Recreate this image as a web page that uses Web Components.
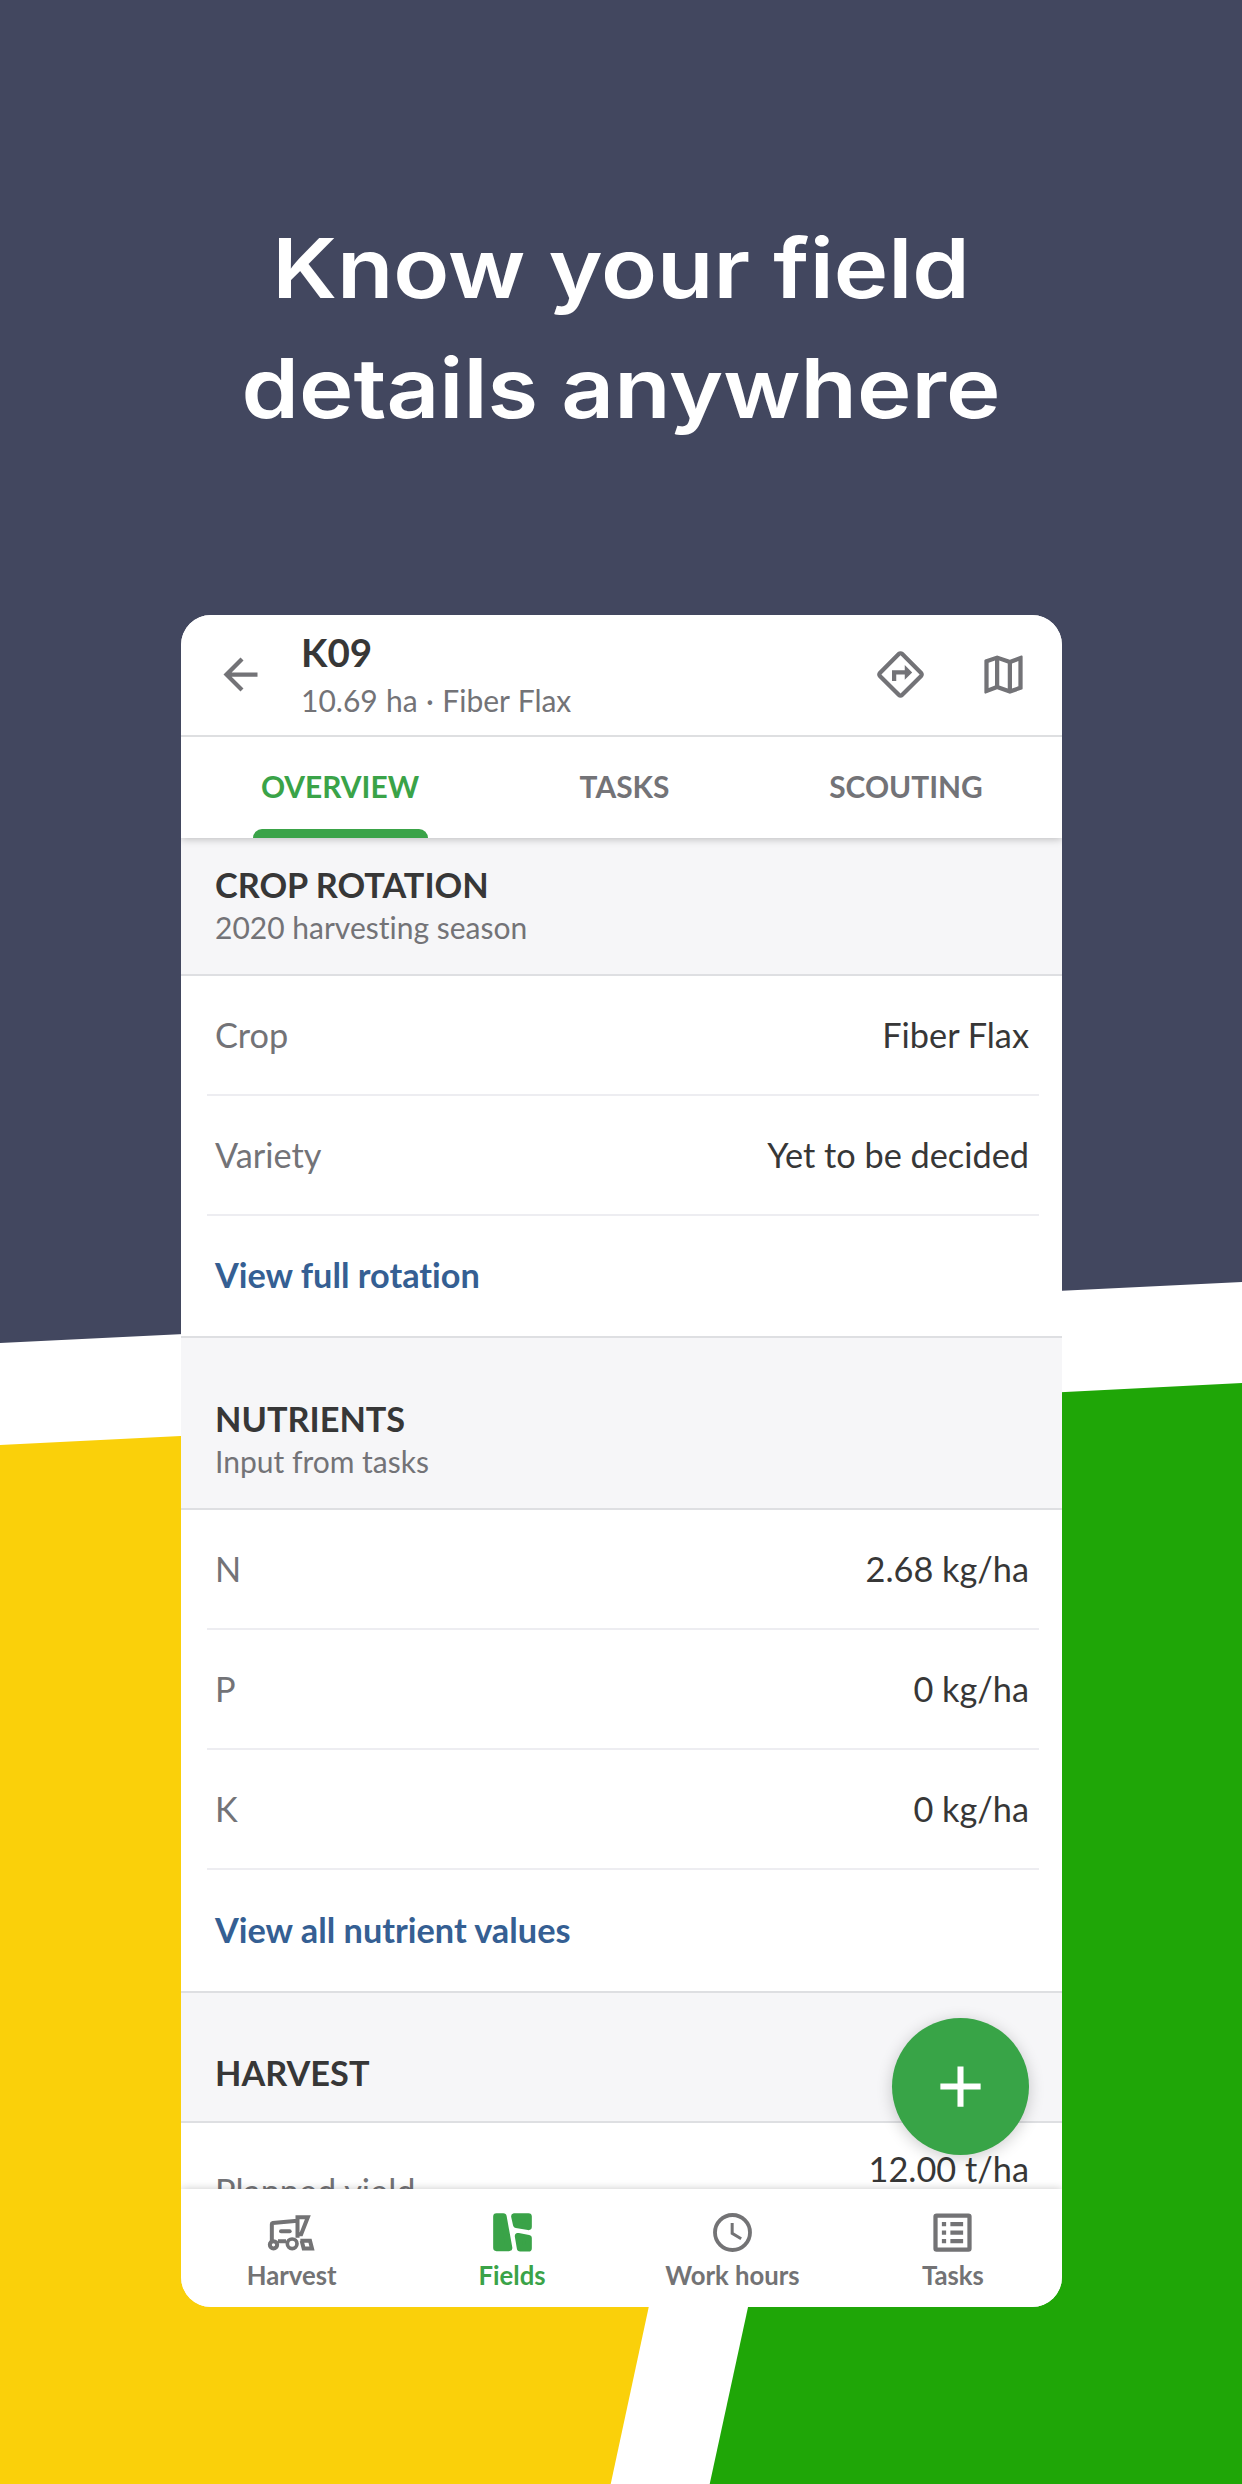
<!DOCTYPE html>
<html lang="en">
<head>
<meta charset="utf-8">
<title>Know your field details anywhere</title>
<style>
    body {
        margin: 0;
        font-family: Lato, sans-serif;
        font-variant-ligatures: none;
        color: #373737;
    }
</style>
</head>
<body>
<promo-page>
    <promo-headline slot="headline">
        <span>Know your field</span>
        <span>details anywhere</span>
    </promo-headline>
    <phone-card>
        <field-header slot="top" name="K09">10.69 ha · Fiber Flax</field-header>
        <tab-bar slot="top">
            <tab-item active>OVERVIEW</tab-item>
            <tab-item>TASKS</tab-item>
            <tab-item>SCOUTING</tab-item>
        </tab-bar>

        <section-head class="first" heading="CROP ROTATION">2020 harvesting season</section-head>
        <data-row label="Crop">Fiber Flax</data-row>
        <data-row label="Variety">Yet to be decided</data-row>
        <link-row>View full rotation</link-row>

        <section-head heading="NUTRIENTS">Input from tasks</section-head>
        <data-row label="N">2.68 kg/ha</data-row>
        <data-row label="P">0 kg/ha</data-row>
        <data-row label="K">0 kg/ha</data-row>
        <link-row class="tall">View all nutrient values</link-row>

        <section-head class="third" heading="HARVEST"></section-head>
        <data-row class="double" label="Planned yield">12.00 t/ha</data-row>

        <add-button slot="fab"></add-button>
        <nav-bar slot="bottom">
            <nav-item icon="harvest">Harvest</nav-item>
            <nav-item icon="fields" active>Fields</nav-item>
            <nav-item icon="clock">Work hours</nav-item>
            <nav-item icon="list">Tasks</nav-item>
        </nav-bar>
    </phone-card>
</promo-page>

<script>
const ICONS = {
    back: `<svg viewBox="0 0 24 24"><path d="M20 11H7.83l5.59-5.59L12 4l-8 8 8 8 1.41-1.41L7.83 13H20v-2z"/></svg>`,
    directions: `<svg viewBox="0 0 24 24"><path d="M22.43 10.59l-9.01-9.01c-.75-.75-2.07-.76-2.83 0l-9 9c-.78.78-.78 2.04 0 2.82l9 9c.39.39.9.58 1.41.58.51 0 1.02-.19 1.41-.58l8.99-8.99c.79-.76.8-2.02.03-2.82zm-10.42 10.4l-9-9 9-9 9 9-9 9zM8 10v5h2v-3h4v2.5l3.5-3.5L14 7.5V10z"/></svg>`,
    map: `<svg viewBox="0 0 24 24"><path d="M20.5 3l-.16.03L15 5.1 9 3 3.36 4.9c-.21.07-.36.25-.36.48V20.5c0 .28.22.5.5.5l.16-.03L9 18.9l6 2.1 5.64-1.9c.21-.07.36-.25.36-.48V3.5c0-.28-.22-.5-.5-.5zM10 5.47l4 1.4v11.66l-4-1.4V5.47zm-5 .99l3-1.01v11.7l-3 1.16V6.46zm14 11.08l-3 1.01V6.86l3-1.16v11.84z"/></svg>`,
    clock: `<svg viewBox="0 0 153 153" fill="none" stroke="currentColor"><circle cx="76.5" cy="76.5" r="52.5" stroke-width="11.5"/><path d="M75.5 48v31l27 16" stroke-width="9"/></svg>`,
    list: `<svg viewBox="0 0 24 24"><path d="M19 5v14H5V5h14m.5-2h-15A1.5 1.5 0 0 0 3 4.5v15A1.5 1.5 0 0 0 4.5 21h15a1.5 1.5 0 0 0 1.5-1.5v-15A1.5 1.5 0 0 0 19.5 3zM11 7h6v2h-6V7zm0 4h6v2h-6v-2zm0 4h6v2h-6v-2zM7 7h2v2H7V7zm0 4h2v2H7v-2zm0 4h2v2H7v-2z"/></svg>`,
    fields: `<svg viewBox="0 0 153 153" stroke="currentColor" stroke-width="20" stroke-linejoin="round"><path d="M28.5 28.5H49L66 122.5H28.5zM82.5 28.5h42V59.5L88 53zM93.5 88l31 6v29.5h-25z"/></svg>`,
    harvest: `<svg viewBox="0 0 153 153" fill="none" stroke="currentColor" stroke-width="12"><path d="M17.5 104V51q0-2.5 2.5-2.8L94.5 41M94.5 92V30.5h31l-20 51h-11M36 103h24M103 101.5h29l6 23h-25l-6-23"/><path d="M45 72.5h26" stroke-linecap="round"/><circle cx="22.5" cy="113.5" r="11"/><circle cx="78.5" cy="110.5" r="14.5" stroke-width="11"/></svg>`,
    plus: `<svg viewBox="0 0 24 24"><path d="M19 13.05h-5.95V19h-2.1v-5.95H5v-2.1h5.95V5h2.1v5.95H19z"/></svg>`,
};

class BaseElement extends HTMLElement {
    constructor() {
        super();
        this.attachShadow({ mode: 'open' });
    }

    connectedCallback() {
        const template = document.createElement('template');
        template.innerHTML = `<style>${this.constructor.style}</style>${this.html}`;
        this.shadowRoot.replaceChildren(template.content.cloneNode(true));
    }

    get html() {
        return `<slot></slot>`;
    }
}

class PromoPage extends BaseElement {
    get html() {
        return `
            <svg class="shapes" viewBox="0 0 1242 2484">
                <path fill="#42475f" d="M0 0H1242V1282L0 1343z"/>
                <path fill="#fad00a" d="M0 1445L843 1403L610.7 2484H0z"/>
                <path fill="#1fa607" d="M945 1398L1242 1383V2484H709.7z"/>
            </svg>
            <slot name="headline"></slot>
            <slot></slot>
        `;
    }

    static get style() {
        return `
            :host {
                display: flex;
                flex-direction: column;
                position: relative;
                box-sizing: border-box;
                width: 1242px;
                height: 2484px;
                padding-left: 181px;
                background: #fff;
                overflow: hidden;
            }
            .shapes {
                position: absolute;
                inset: 0;
            }
        `;
    }
}

class PromoHeadline extends BaseElement {
    static get style() {
        return `
            :host {
                display: flex;
                flex-direction: column;
                align-items: center;
                position: relative;
                box-sizing: border-box;
                width: 880px;
                height: 615px;
                padding-top: 208px;
                font: 600 83px/120px Inter, sans-serif;
                font-variant-ligatures: none;
                color: #fff;
                transform: scaleX(1.11);
            }
        `;
    }
}

class PhoneCard extends BaseElement {
    get html() {
        return `
            <div class="top"><slot name="top"></slot></div>
            <div class="content"><slot></slot></div>
            <slot name="fab"></slot>
            <slot name="bottom"></slot>
        `;
    }

    static get style() {
        return `
            :host {
                display: flex;
                flex-direction: column;
                position: relative;
                width: 881px;
                height: 1692px;
                border-radius: 30px;
                background: #fff;
                overflow: hidden;
            }
            .top {
                position: relative;
                z-index: 1;
                background: #fff;
                box-shadow: 0 1px 8px rgba(0, 0, 0, .25);
            }
            .content {
                flex: 1;
                min-height: 0;
                overflow: hidden;
            }
        `;
    }
}

class FieldHeader extends BaseElement {
    get html() {
        return `
            ${ICONS.back}
            <div class="titles">
                <div class="name">${this.getAttribute('name')}</div>
                <div class="info"><slot></slot></div>
            </div>
            ${ICONS.directions}
            ${ICONS.map}
        `;
    }

    static get style() {
        return `
            :host {
                display: flex;
                align-items: center;
                height: 120px;
                padding: 0 33px 0 34px;
                border-bottom: 2px solid #dedfe1;
                color: #737377;
            }
            svg {
                width: 51px;
                height: 51px;
                margin-top: -1px;
                fill: currentColor;
            }
            svg + svg {
                margin-left: 52px;
            }
            .titles {
                flex: 1;
                margin: -4px 0 0 35px;
            }
            .name {
                font-size: 38.6px;
                font-weight: bold;
                line-height: 48px;
                color: #373737;
            }
            .info {
                margin-top: 6px;
                font-size: 30px;
                line-height: 36px;
                word-spacing: .7px;
            }
        `;
    }
}

class TabBar extends BaseElement {
    static get style() {
        return `
            :host {
                display: grid;
                grid-template-columns: 318px 251px 1fr;
                height: 101px;
            }
        `;
    }
}

class TabItem extends BaseElement {
    get html() {
        return `<span></span><div><slot></slot></div><span class="mark"></span>`;
    }

    static get style() {
        return `
            :host {
                display: grid;
                grid-template-rows: 6px 1fr 9px;
                justify-items: center;
                align-items: center;
                font-size: 29.9px;
                font-weight: bold;
                line-height: 36px;
                color: #737377;
            }
            :host([active]) {
                color: #3aa348;
            }
            :host([active]) .mark {
                width: 175px;
                height: 9px;
                border-radius: 9px 9px 0 0;
                background: currentColor;
            }
        `;
    }
}

class SectionHead extends BaseElement {
    get html() {
        return `
            <div class="heading">${this.getAttribute('heading')}</div>
            <div class="note"><slot></slot></div>
        `;
    }

    static get style() {
        return `
            :host {
                display: flex;
                flex-direction: column;
                justify-content: flex-end;
                box-sizing: border-box;
                height: 174px;
                padding: 0 34px 29px;
                border: solid #dedfe2;
                border-width: 2px 0;
                background: #f6f6f8;
            }
            :host(.first) {
                height: 138px;
                border-top: 0;
            }
            :host(.third) {
                height: 132px;
                padding-bottom: 27px;
            }
            .heading {
                font-size: 34.3px;
                font-weight: bold;
                line-height: 42px;
            }
            .note {
                margin-top: 3px;
                font-size: 30px;
                line-height: 36px;
                color: #737377;
            }
            :host(.third) .note {
                display: none;
            }
        `;
    }
}

class DataRow extends BaseElement {
    get html() {
        return `
            <span class="label">${this.getAttribute('label')}</span>
            <span class="value"><slot></slot></span>
        `;
    }

    static get style() {
        return `
            :host {
                display: flex;
                align-items: center;
                justify-content: space-between;
                box-sizing: border-box;
                height: 120px;
                margin: 0 23px 0 26px;
                padding: 0 10px 0 8px;
                border-bottom: 2px solid #ededf1;
                font-size: 34.3px;
                line-height: 42px;
            }
            .label {
                color: #737377;
            }
            :host(.double) {
                height: 137px;
            }
            :host(.double) .value {
                align-self: flex-start;
                margin-top: 25px;
            }
        `;
    }
}

class LinkRow extends BaseElement {
    static get style() {
        return `
            :host {
                display: flex;
                align-items: center;
                box-sizing: border-box;
                height: 120px;
                padding: 0 34px 2px;
                font-size: 34.3px;
                font-weight: bold;
                line-height: 42px;
                color: #355f93;
            }
            :host(.tall) {
                height: 121px;
            }
        `;
    }
}

class AddButton extends BaseElement {
    get html() {
        return ICONS.plus;
    }

    static get style() {
        return `
            :host {
                display: grid;
                place-items: center;
                position: absolute;
                right: 33px;
                bottom: 152px;
                width: 137px;
                height: 137px;
                border-radius: 50%;
                background: #38a447;
                box-shadow: 0 3px 16px rgba(0, 0, 0, .2);
            }
            svg {
                width: 69px;
                height: 69px;
                fill: #fff;
            }
        `;
    }
}

class NavBar extends BaseElement {
    static get style() {
        return `
            :host {
                display: grid;
                grid-template-columns: repeat(4, 220.4px);
                position: relative;
                height: 118px;
                background: #fff;
                box-shadow: 0 0 8px rgba(0, 0, 0, .22);
            }
        `;
    }
}

class NavItem extends BaseElement {
    get html() {
        return `${ICONS[this.getAttribute('icon')]}<slot></slot>`;
    }

    static get style() {
        return `
            :host {
                display: flex;
                flex-direction: column;
                align-items: center;
                padding: 18px 0 0 1px;
                font-size: 25.7px;
                font-weight: bold;
                line-height: 34px;
                color: #737375;
            }
            :host([active]) {
                color: #3aa348;
            }
            svg {
                width: 51px;
                height: 51px;
                fill: currentColor;
            }
            svg[fill="none"] {
                fill: none;
            }
        `;
    }
}

customElements.define('promo-page', PromoPage);
customElements.define('promo-headline', PromoHeadline);
customElements.define('phone-card', PhoneCard);
customElements.define('field-header', FieldHeader);
customElements.define('tab-bar', TabBar);
customElements.define('tab-item', TabItem);
customElements.define('section-head', SectionHead);
customElements.define('data-row', DataRow);
customElements.define('link-row', LinkRow);
customElements.define('add-button', AddButton);
customElements.define('nav-bar', NavBar);
customElements.define('nav-item', NavItem);
</script>
</body>
</html>
